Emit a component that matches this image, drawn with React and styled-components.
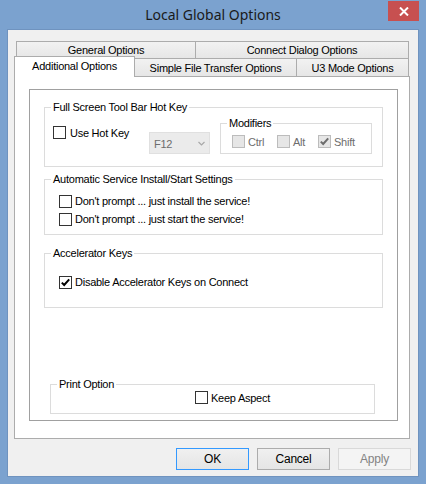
import React from 'react';
import styled, { createGlobalStyle } from 'styled-components';

const GlobalStyle = createGlobalStyle`
  html, body {
    margin: 0;
    padding: 0;
    background: #7ba2cf;
  }
  body {
    font-family: "Liberation Sans", Arial, sans-serif;
    font-size: 11px;
    letter-spacing: -0.25px;
    color: #000;
  }
`;

const Window = styled.div`
  width: 426px;
  height: 484px;
  box-sizing: border-box;
  background: #7ba2cf;
  display: flex;
  flex-direction: column;
`;

const TitleBar = styled.div`
  height: 30px;
  display: grid;
  grid-template-columns: 1fr auto 1fr;
  align-items: start;
`;

const Title = styled.div`
  grid-column: 2;
  align-self: center;
  font-family: "Noto Sans", "Open Sans", sans-serif;
  font-size: 14px;
  letter-spacing: 0;
  color: #1a1a1a;
  padding-bottom: 1px;
`;

const CloseButton = styled.div`
  grid-column: 3;
  justify-self: end;
  width: 31px;
  height: 20px;
  margin-top: 1px;
  margin-right: 7px;
  background: #c75050;
  display: flex;
  align-items: center;
  justify-content: center;
`;

const Client = styled.div`
  flex: 1;
  margin: 0 8px 8px 8px;
  background: #f0f0f0;
  box-shadow: 0 0 0 1px #6f93bf;
  padding: 11px 0 0 6px;
  display: flex;
  flex-direction: column;
`;

const TabRow = styled.div`
  display: flex;
  align-items: flex-end;
  height: ${p => (p.$front ? 20 : 17)}px;
  margin-top: ${p => (p.$front ? -2 : 0)}px;
  padding-left: ${p => (p.$front ? 0 : 2)}px;
`;

const Tab = styled.div`
  box-sizing: border-box;
  width: ${p => p.$w}px;
  height: ${p => (p.$selected ? 21 : p.$front ? 18 : 17)}px;
  margin-bottom: ${p => (p.$selected ? -1 : 0)}px;
  margin-left: ${p => (p.$first ? 0 : -1)}px;
  border: 1px solid #acacac;
  border-bottom: none;
  background: ${p => (p.$selected ? '#fff' : 'linear-gradient(#f2f2f2, #e6e6e6)')};
  position: relative;
  z-index: ${p => (p.$selected ? 2 : 1)};
  display: flex;
  align-items: center;
  justify-content: center;
  padding-bottom: ${p => (p.$selected ? 2 : 0)}px;
  white-space: nowrap;
`;

const Panel = styled.div`
  box-sizing: border-box;
  width: 396px;
  height: 363px;
  background: #fff;
  border: 1px solid #acacac;
  padding: 12px 0 0 14px;
`;

const Frame = styled.div`
  box-sizing: border-box;
  width: 369px;
  height: 332px;
  border: 1px solid #a0a0a0;
  padding: 10px 14px 6px 14px;
  display: flex;
  flex-direction: column;
`;

const Group = styled.fieldset`
  box-sizing: border-box;
  margin: ${p => p.$margin || '0'};
  padding: 0;
  border: 1px solid #dcdcdc;
  min-width: 0;
  width: ${p => p.$w || 339}px;
`;

const Legend = styled.legend`
  margin-left: 6px;
  padding: 0 2px;
  line-height: 14px;
  font-size: 11px;
`;

const GroupBody = styled.div`
  padding: ${p => p.$pad};
  display: flex;
  flex-direction: ${p => (p.$row ? 'row' : 'column')};
  align-items: flex-start;
`;

const CheckRow = styled.label`
  display: flex;
  align-items: center;
  height: ${p => p.$h || 18}px;
  width: ${p => (p.$w ? `${p.$w}px` : 'auto')};
  margin-top: ${p => p.$mt || 0}px;
  gap: ${p => p.$gap || 3}px;
  color: ${p => (p.$disabled ? '#6d6d6d' : '#000')};
  white-space: nowrap;
`;

const Box = styled.span`
  box-sizing: border-box;
  width: 13px;
  height: 13px;
  flex: none;
  border: 1px solid ${p => (p.$disabled ? '#bcbcbc' : '#333')};
  background: ${p => (p.$disabled ? '#e6e6e6' : '#fff')};
  display: flex;
  align-items: center;
  justify-content: center;
`;

const Combo = styled.div`
  box-sizing: border-box;
  width: 61px;
  height: 22px;
  margin-top: 18px;
  background: #ebebeb;
  border: 1px solid #e0e0e0;
  color: #6d6d6d;
  display: flex;
  align-items: center;
  justify-content: space-between;
  padding: 1px 4px 0 4px;
`;

const ButtonBar = styled.div`
  display: flex;
  justify-content: flex-end;
  gap: 8px;
  margin-top: 9px;
  padding-right: 7px;
`;

const Button = styled.div`
  box-sizing: border-box;
  width: 73px;
  height: 22px;
  border: 1px solid ${p => (p.$default ? '#3399ff' : p.$disabled ? '#d9d9d9' : '#acacac')};
  background: ${p => (p.$disabled ? '#f4f4f4' : 'linear-gradient(#f0f0f0, #e5e5e5)')};
  color: ${p => (p.$disabled ? '#838383' : '#000')};
  display: flex;
  align-items: center;
  justify-content: center;
  font-size: 12px;
`;

function CheckBox({ checked, disabled, label, ...rest }) {
  return (
    <CheckRow $disabled={disabled} {...rest}>
      <Box $disabled={disabled}>
        {checked && (
          <svg width="11" height="11" viewBox="0 0 11 11">
            <polyline
              points="1.8,5.6 4.2,8 9.2,2.4"
              fill="none"
              stroke={disabled ? '#6d6d6d' : '#000'}
              strokeWidth="2"
            />
          </svg>
        )}
      </Box>
      <span>{label}</span>
    </CheckRow>
  );
}

export default function App() {
  return (
    <Window>
      <GlobalStyle />
      <TitleBar>
        <Title>Local Global Options</Title>
        <CloseButton>
          <svg width="10" height="9" viewBox="0 0 10 9">
            <path d="M1 0.5 L9 8.5 M9 0.5 L1 8.5" stroke="#fff" strokeWidth="2" />
          </svg>
        </CloseButton>
      </TitleBar>
      <Client>
        <div>
          <TabRow>
            <Tab $w={180} $first>General Options</Tab>
            <Tab $w={214}>Connect Dialog Options</Tab>
          </TabRow>
          <TabRow $front>
            <Tab $w={121} $first $selected $front>Additional Options</Tab>
            <Tab $w={163} $front>Simple File Transfer Options</Tab>
            <Tab $w={113} $front>U3 Mode Options</Tab>
          </TabRow>
        </div>
        <Panel>
          <Frame>
            <Group>
              <Legend>Full Screen Tool Bar Hot Key</Legend>
              <GroupBody $row $pad="0 0 12px 8px">
                <CheckBox label="Use Hot Key" $w={96} $h={13} $mt={12} $gap={4} />
                <Combo>
                  <span>F12</span>
                  <svg width="7" height="5" viewBox="0 0 7 5">
                    <path d="M0.5 1 L3.5 4 L6.5 1" fill="none" stroke="#a8a8a8" strokeWidth="1.2" />
                  </svg>
                </Combo>
                <Group $w={152} $margin="2px 0 0 10px">
                  <Legend>Modifiers</Legend>
                  <GroupBody $row $pad="5px 0 5px 11px">
                    <CheckBox label="Ctrl" disabled $w={45} $h={13} />
                    <CheckBox label="Alt" disabled $w={41} $h={13} />
                    <CheckBox label="Shift" disabled checked $h={13} />
                  </GroupBody>
                </Group>
              </GroupBody>
            </Group>

            <Group $margin="5px 0 0 0">
              <Legend>Automatic Service Install/Start Settings</Legend>
              <GroupBody $pad="6px 0 6px 14px">
                <CheckBox label="Don't prompt ... just install the service!" />
                <CheckBox label="Don't prompt ... just start the service!" />
              </GroupBody>
            </Group>

            <Group $margin="11px 0 0 0">
              <Legend>Accelerator Keys</Legend>
              <GroupBody $pad="13px 0 16px 14px">
                <CheckBox label="Disable Accelerator Keys on Connect" checked />
              </GroupBody>
            </Group>

            <Group $w={325} $margin="auto 0 0 6px">
              <Legend>Print Option</Legend>
              <GroupBody $pad="0 0 9px 144px">
                <CheckBox label="Keep Aspect" $h={13} />
              </GroupBody>
            </Group>
          </Frame>
        </Panel>
        <ButtonBar>
          <Button $default>OK</Button>
          <Button>Cancel</Button>
          <Button $disabled>Apply</Button>
        </ButtonBar>
      </Client>
    </Window>
  );
}
